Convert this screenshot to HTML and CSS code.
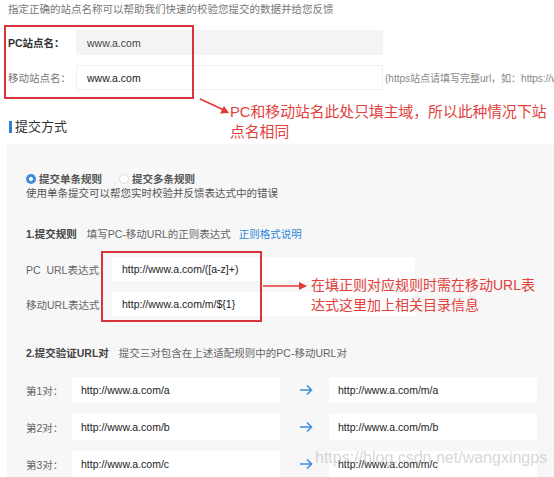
FILE: index.html
```html
<!DOCTYPE html>
<html lang="zh-CN">
<head>
<meta charset="utf-8">
<title>提交方式</title>
<link rel="stylesheet" href="styles.css">
</head>
<body>
<div class="page">
  <p class="intro">指定正确的站点名称可以帮助我们快速的校验您提交的数据并给您反馈</p>

  <div class="site-form">
    <div class="row">
      <span class="lbl lbl-strong">PC站点名：</span>
      <div class="field field-gray">www.a.com</div>
    </div>
    <div class="row">
      <span class="lbl">移动站点名：</span>
      <div class="field field-white">www.a.com</div>
      <span class="hint">(https站点请填写完整url，如：https://www.a.com)</span>
    </div>
  </div>

  <h2 class="section-title"><span class="bar"></span>提交方式</h2>

  <div class="panel">
    <div class="radios">
      <span class="radio radio-on"></span><span class="radio-text">提交单条规则</span>
      <span class="radio radio-off"></span><span class="radio-text">提交多条规则</span>
    </div>
    <p class="desc">使用单条提交可以帮您实时校验并反馈表达式中的错误</p>

    <p class="step"><b>1.提交规则</b><span class="step-sub">填写PC-移动URL的正则表达式</span><a class="link">正则格式说明</a></p>
    <div class="rules">
      <div class="rule-row">
        <span class="rule-lbl">PC&nbsp; URL表达式：</span>
        <div class="field rule-field">http://www.a.com/([a-z]+)</div>
      </div>
      <div class="rule-row">
        <span class="rule-lbl">移动URL表达式：</span>
        <div class="field rule-field">http://www.a.com/m/${1}</div>
      </div>
    </div>

    <p class="step step2"><b>2.提交验证URL对</b><span class="step-sub">提交三对包含在上述适配规则中的PC-移动URL对</span></p>
    <div class="pairs">
      <div class="pair">
        <span class="pair-lbl">第1对：</span>
        <div class="field pair-field">http://www.a.com/a</div>
        <span class="pair-arrow"><svg width="14" height="12" viewBox="0 0 14 12"><path d="M1 6H12.5M8 1.5L12.5 6L8 10.5" fill="none" stroke="#3d8ddb" stroke-width="1.6"/></svg></span>
        <div class="field pair-field">http://www.a.com/m/a</div>
      </div>
      <div class="pair">
        <span class="pair-lbl">第2对：</span>
        <div class="field pair-field">http://www.a.com/b</div>
        <span class="pair-arrow"><svg width="14" height="12" viewBox="0 0 14 12"><path d="M1 6H12.5M8 1.5L12.5 6L8 10.5" fill="none" stroke="#3d8ddb" stroke-width="1.6"/></svg></span>
        <div class="field pair-field">http://www.a.com/m/b</div>
      </div>
      <div class="pair">
        <span class="pair-lbl">第3对：</span>
        <div class="field pair-field">http://www.a.com/c</div>
        <span class="pair-arrow"><svg width="14" height="12" viewBox="0 0 14 12"><path d="M1 6H12.5M8 1.5L12.5 6L8 10.5" fill="none" stroke="#3d8ddb" stroke-width="1.6"/></svg></span>
        <div class="field pair-field">http://www.a.com/m/c</div>
      </div>
    </div>
  </div>

  <!-- annotation overlays -->
  <div class="redbox redbox-1"></div>
  <svg class="callout-arrow arrow-1" width="36" height="20" viewBox="0 0 36 20"><path d="M2 3L26 14" stroke="#e23a36" stroke-width="1.6"/><path d="M31 17L22 17.5L26 10Z" fill="#e23a36"/></svg>
  <p class="note note-1">PC和移动站名此处只填主域，所以此种情况下站<br>点名相同</p>

  <div class="redbox redbox-2"></div>
  <svg class="callout-arrow arrow-2" width="46" height="10" viewBox="0 0 46 10"><path d="M1 5H38" stroke="#e23a36" stroke-width="1.6"/><path d="M45 5L37 1V9Z" fill="#e23a36"/></svg>
  <p class="note note-2">在填正则对应规则时需在移动URL表<br>达式这里加上相关目录信息</p>

  <span class="watermark">https://blog.csdn.net/wangxingps</span>
</div>
</body>
</html>
```

FILE: styles.css
```css
* { box-sizing: border-box; }
html, body {
  margin: 0;
  padding: 0;
  background: #fff;
}
body {
  font-family: "Liberation Sans", "Noto Sans CJK SC", sans-serif;
  color: #555;
  width: 554px;
  height: 477px;
  overflow: hidden;
}
.page {
  position: relative;
  width: 554px;
  height: 477px;
  overflow: hidden;
}
p { margin: 0; }

.intro {
  padding: 2px 0 0 8px;
  font-size: 10.5px;
  line-height: 14px;
  color: #777;
}

.site-form {
  display: flex;
  flex-direction: column;
  gap: 10px;
  padding: 14px 0 0 8px;
}
.row {
  display: flex;
  align-items: center;
  white-space: nowrap;
}
.lbl {
  width: 68px;
  flex: none;
  font-size: 10.5px;
  color: #777;
}
.lbl-strong {
  color: #333;
  font-weight: 700;
}
.field {
  display: flex;
  align-items: center;
  flex: none;
  font-size: 10.5px;
  color: #222;
  background: #fff;
}
.site-form .field {
  width: 307px;
  height: 25px;
  padding-left: 11px;
}
.field-gray { background: #f4f4f4; color: #444; }
.field-white { border: 1px solid #f0f0f0; padding-left: 10px !important; }
.hint {
  margin-left: 2px;
  font-size: 10px;
  color: #888;
}

.section-title {
  display: flex;
  align-items: center;
  gap: 3px;
  margin: 29px 0 0 9px;
  font-size: 13px;
  line-height: 16px;
  font-weight: 400;
  color: #333;
}
.bar {
  width: 3px;
  height: 12px;
  background: #2f7fd6;
}

.panel {
  margin: 9px 0 0 7px;
  height: 340px;
  background: #f7f7f7;
  padding: 27px 0 0 19px;
}
.radios {
  display: flex;
  align-items: center;
  height: 15px;
  font-size: 10.5px;
  color: #555;
}
.radio {
  width: 10px;
  height: 10px;
  border-radius: 50%;
  flex: none;
}
.radio-on {
  background: radial-gradient(circle, #fff 0 1.6px, #3d8ee0 2.2px);
}
.radio-off {
  border: 1px solid #dcdcdc;
  background: #fff;
  margin-left: 17px;
}
.radio-text {
  margin-left: 3px;
  font-weight: 700;
  color: #555;
}
.desc {
  font-size: 10.5px;
  line-height: 15px;
  color: #555;
}

.step {
  margin-top: 26px;
  font-size: 10.5px;
  line-height: 15px;
  color: #666;
  white-space: nowrap;
}
.step b { color: #444; }
.step-sub { margin-left: 10px; }
.link {
  margin-left: 8px;
  color: #2f86d8;
}

.rules {
  display: flex;
  flex-direction: column;
  gap: 11px;
  margin-top: 15px;
}
.rule-row {
  display: flex;
  align-items: center;
}
.rule-lbl {
  width: 86px;
  flex: none;
  font-size: 10.5px;
  color: #666;
  white-space: nowrap;
}
.rule-field {
  width: 303px;
  height: 24px;
  padding-left: 10px;
}

.step2 { margin-top: 30px; }

.pairs {
  display: flex;
  flex-direction: column;
  gap: 11px;
  margin-top: 16px;
}
.pair {
  display: flex;
  align-items: center;
}
.pair-lbl {
  width: 46px;
  flex: none;
  font-size: 10.5px;
  color: #666;
}
.pair-field {
  width: 208px;
  height: 26px;
  padding-left: 9px;
}
.pair-arrow {
  width: 49px;
  flex: none;
  display: flex;
  justify-content: center;
  padding-left: 2px;
}
.pair-arrow svg { display: block; }

/* overlays */
.redbox {
  position: absolute;
  border: 2px solid #d8343b;
}
.redbox-1 { left: 4px; top: 25px; width: 190px; height: 74px; }
.redbox-2 { left: 101px; top: 251px; width: 161px; height: 71px; }

.callout-arrow { position: absolute; }
.arrow-1 { left: 198px; top: 96px; }
.arrow-2 { left: 262px; top: 281px; }

.note {
  position: absolute;
  color: #e2403c;
  line-height: 20px;
  white-space: nowrap;
}
.note-1 { left: 230px; top: 102px; font-size: 14.8px; }
.note-2 { left: 311px; top: 275px; font-size: 14px; }

.watermark {
  position: absolute;
  left: 315px;
  top: 449px;
  font-size: 16px;
  line-height: 18px;
  color: rgba(180, 180, 180, 0.55);
  white-space: nowrap;
}
```
